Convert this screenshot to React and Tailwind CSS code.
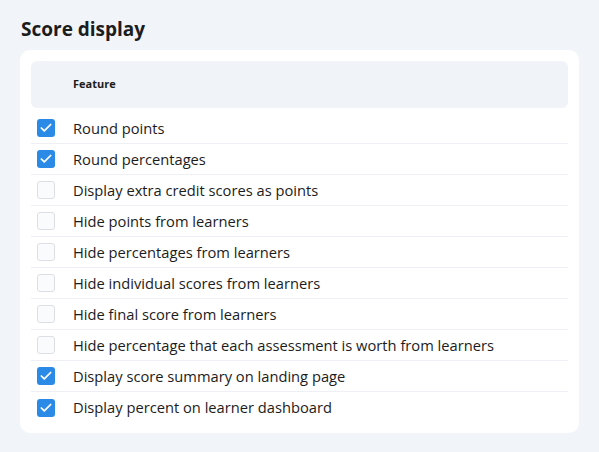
import { Check } from "lucide-react";

const features = [
  { label: "Round points", checked: true },
  { label: "Round percentages", checked: true },
  { label: "Display extra credit scores as points", checked: false },
  { label: "Hide points from learners", checked: false },
  { label: "Hide percentages from learners", checked: false },
  { label: "Hide individual scores from learners", checked: false },
  { label: "Hide final score from learners", checked: false },
  { label: "Hide percentage that each assessment is worth from learners", checked: false },
  { label: "Display score summary on landing page", checked: true },
  { label: "Display percent on learner dashboard", checked: true },
];

const Checkbox = ({ checked }) =>
  checked ? (
    <div className="w-[18px] h-[18px] rounded-[3px] bg-[#2b8ae6] flex items-center justify-center">
      <Check size={14} strokeWidth={3} className="text-white" />
    </div>
  ) : (
    <div className="w-[18px] h-[18px] rounded-[3px] border border-[#dcdfe5] bg-[#fafbfc]" />
  );

export default function App() {
  return (
    <div
      className="w-[599px] h-[452px] bg-[#f1f4f9] pt-[16px] px-[20px] text-[#1c1c1c]"
      style={{ fontFamily: '"Open Sans", "Liberation Sans", sans-serif' }}
    >
      <h1 className="text-[19px] font-bold leading-[26px] pl-[1px]">Score display</h1>
      <div className="mt-[8px] bg-white rounded-[10px] p-[11px] pb-[10px]">
        <div className="h-[47px] bg-[#f0f3f8] rounded-[6px] flex items-center pl-[42px]">
          <span className="text-[11px] font-bold">Feature</span>
        </div>
        <div className="pt-[5px]">
          {features.map((f, i) => (
            <div
              key={f.label}
              className={`h-[31px] flex items-center ${i < features.length - 1 ? "border-b border-[#eef0f5]" : ""}`}
            >
              <div className="w-[42px] pl-[6px]">
                <Checkbox checked={f.checked} />
              </div>
              <span className="text-[14.7px]">{f.label}</span>
            </div>
          ))}
        </div>
      </div>
    </div>
  );
}
